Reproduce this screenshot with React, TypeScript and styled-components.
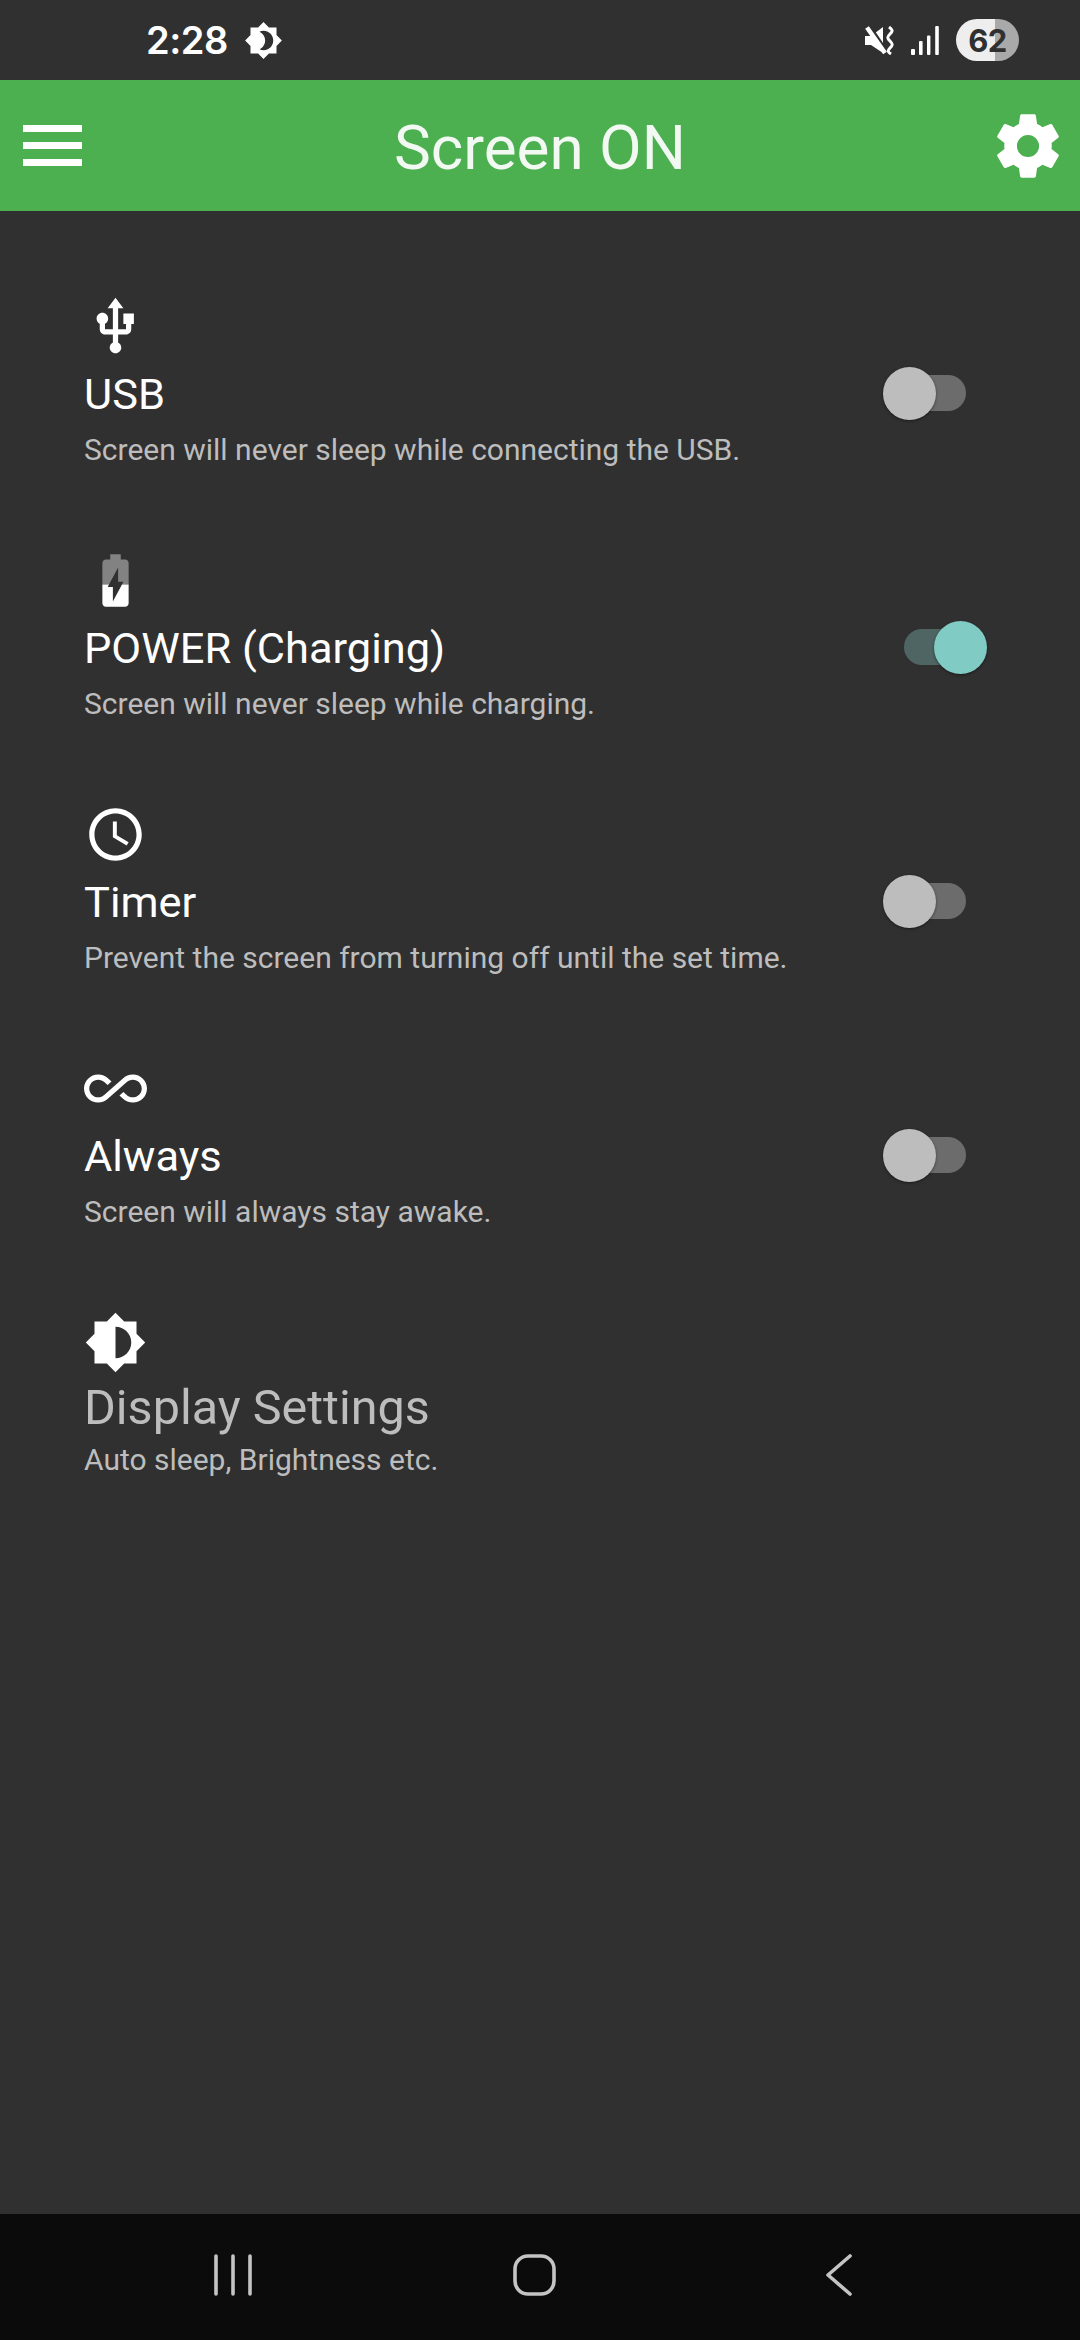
import React from "react";
import styled, { createGlobalStyle } from "styled-components";

const Global = createGlobalStyle`
  html, body { margin: 0; padding: 0; background: #303030; }
  * { box-sizing: border-box; }
`;

const Page = styled.div`
  width: 1080px;
  height: 2340px;
  display: flex;
  flex-direction: column;
  background: #303030;
  font-family: Roboto, "Noto Sans", sans-serif;
  color: #fff;
  overflow: hidden;
`;

const StatusBar = styled.div`
  height: 80px;
  flex: none;
  display: flex;
  align-items: center;
  justify-content: space-between;
  padding: 0 61px 0 146px;
`;

const StatusGroup = styled.div<{ $gap: number }>`
  display: flex;
  align-items: center;
  gap: ${(p) => p.$gap}px;
`;

const Clock = styled.span`
  font-family: Inter, Roboto, sans-serif;
  font-size: 38px;
  font-weight: 600;
  letter-spacing: -0.5px;
  line-height: 44px;
`;

const Battery = styled.div`
  width: 63px;
  height: 42px;
  border-radius: 21px;
  background: linear-gradient(to right, #eeeeee 0, #eeeeee 39px, #a9a9a9 39px, #a9a9a9 100%);
  color: #303030;
  display: flex;
  align-items: center;
  justify-content: center;
  font-family: Inter, Roboto, sans-serif;
  font-size: 31px;
  font-weight: 700;
  letter-spacing: -0.5px;
`;

const AppBar = styled.header`
  height: 131px;
  flex: none;
  background: #4caf50;
  display: grid;
  grid-template-columns: 1fr auto 1fr;
  align-items: center;
  padding: 0 14px 0 23px;
`;

const AppTitle = styled.h1`
  margin: 0 9px 0 0;
  padding-top: 5px;
  font-size: 62px;
  font-weight: 400;
  color: rgba(255, 255, 255, 0.93);
  line-height: 70px;
`;

const GearSlot = styled.div`
  display: flex;
  justify-content: flex-end;
`;

const Main = styled.main`
  flex: 1;
  padding: 84px 0 0 84px;
  display: flex;
  flex-direction: column;
`;

const Row = styled.section`
  height: 254px;
  display: flex;
  align-items: flex-start;
  justify-content: space-between;
  padding-right: 114px;
`;

const RowText = styled.div`
  display: flex;
  flex-direction: column;
`;

const IconBox = styled.svg`
  width: 63px;
  height: 63px;
  display: block;
  fill: #fff;
`;

const RowTitle = styled.div<{ $muted?: boolean }>`
  font-size: ${(p) => (p.$muted ? 48.5 : 43.4)}px;
  line-height: ${(p) => (p.$muted ? 56 : 52)}px;
  color: ${(p) => (p.$muted ? "#bdbdbd" : "#fff")};
  margin-top: ${(p) => (p.$muted ? 6 : 11)}px;
`;

const RowDesc = styled.div<{ $tight?: boolean }>`
  font-size: 30px;
  line-height: 38px;
  color: #bdbdbd;
  margin-top: ${(p) => (p.$tight ? 5 : 10)}px;
`;

const Switch = styled.div<{ $on?: boolean }>`
  position: relative;
  width: 83px;
  height: 53px;
  flex: none;
  margin-top: 72px;
  margin-right: ${(p) => (p.$on ? -21 : 0)}px;
`;

const Track = styled.div<{ $on?: boolean }>`
  position: absolute;
  top: 8px;
  left: ${(p) => (p.$on ? 0 : 14)}px;
  width: 69px;
  height: 36px;
  border-radius: 18px;
  background: ${(p) => (p.$on ? "#4f6563" : "#6c6c6c")};
`;

const Thumb = styled.div<{ $on?: boolean }>`
  position: absolute;
  top: 0;
  left: ${(p) => (p.$on ? 30 : 0)}px;
  width: 53px;
  height: 53px;
  border-radius: 50%;
  background: ${(p) => (p.$on ? "#80cbc4" : "#bdbdbd")};
  box-shadow: 0 1px 3px rgba(0, 0, 0, 0.45);
`;

const NavBar = styled.nav`
  height: 126px;
  flex: none;
  background: #0b0b0b;
  display: grid;
  grid-template-columns: 299px 312px auto;
  align-items: flex-start;
  padding: 40px 0 0 214px;
`;

const NavIcon = styled.svg`
  display: block;
  height: 42px;
  fill: none;
  stroke: #c4c4c4;
  stroke-width: 3.6px;
  stroke-linecap: round;
  stroke-linejoin: round;
`;

const MoonIcon = () => (
  <svg width="39" height="39" viewBox="0 0 24 24" fill="#fff">
    <path d="M20 8.69V4h-4.69L12 .69 8.69 4H4v4.69L.69 12 4 15.31V20h4.69L12 23.31 15.31 20H20v-4.69L23.31 12 20 8.69zM12 18c-.89 0-1.74-.2-2.5-.55C11.56 16.5 13 14.42 13 12s-1.44-4.5-3.5-5.45C10.26 6.2 11.11 6 12 6c3.31 0 6 2.69 6 6s-2.69 6-6 6z" />
  </svg>
);

const MuteIcon = () => (
  <svg width="29" height="29" viewBox="0 0 29 29">
    <path d="M0 10h6L18 1v26L6 19H0z" fill="#fff" />
    <path d="M5.5 1L23 27" stroke="#303030" strokeWidth="3" fill="none" />
    <path d="M2 1.5L20 27" stroke="#fff" strokeWidth="4.5" fill="none" />
    <path d="M24 1C28 4 28 5 25 8S22 12 25 15 28 19 25 22 23 26 26 28" stroke="#fff" strokeWidth="3" fill="none" />
  </svg>
);

const SignalIcon = () => (
  <svg width="28" height="29" viewBox="0 0 28 29" fill="#fff">
    <rect x="0" y="23" width="4" height="6" rx="1" />
    <rect x="8" y="15" width="3.6" height="14" rx="1" />
    <rect x="16" y="9.5" width="3.4" height="19.5" rx="1" />
    <rect x="24.2" y="0" width="3.6" height="29" rx="1" />
  </svg>
);

const MenuIcon = () => (
  <svg width="59" height="41" viewBox="0 0 59 41" fill="#fff">
    <rect x="0" y="0" width="59" height="7" />
    <rect x="0" y="17" width="59" height="7" />
    <rect x="0" y="34" width="59" height="7" />
  </svg>
);

const GearIcon = () => (
  <svg width="76" height="76" viewBox="0 0 24 24" fill="#fff">
    <path d="M19.43 12.98c.04-.32.07-.64.07-.98s-.03-.66-.07-.98l2.11-1.65c.19-.15.24-.42.12-.64l-2-3.46c-.12-.22-.39-.3-.61-.22l-2.49 1c-.52-.4-1.08-.73-1.69-.98l-.38-2.65C14.46 2.18 14.25 2 14 2h-4c-.25 0-.46.18-.49.42l-.38 2.65c-.61.25-1.17.59-1.69.98l-2.49-1c-.23-.09-.49 0-.61.22l-2 3.46c-.13.22-.07.49.12.64l2.11 1.65c-.04.32-.07.65-.07.98s.03.66.07.98l-2.11 1.65c-.19.15-.24.42-.12.64l2 3.46c.12.22.39.3.61.22l2.49-1c.52.4 1.08.73 1.69.98l.38 2.65c.03.24.24.42.49.42h4c.25 0 .46-.18.49-.42l.38-2.65c.61-.25 1.17-.59 1.69-.98l2.49 1c.23.09.49 0 .61-.22l2-3.46c.12-.22.07-.49-.12-.64l-2.11-1.65zM12 15.5c-1.93 0-3.5-1.57-3.5-3.5s1.57-3.5 3.5-3.5 3.5 1.57 3.5 3.5-1.57 3.5-3.5 3.5z" />
  </svg>
);

const icons: Record<string, React.ReactNode> = {
  usb: (
    <path d="M15 7v4h1v2h-3V5h2l-3-4-3 4h2v8H8v-2.07c.7-.37 1.2-1.08 1.2-1.93 0-1.21-.99-2.2-2.2-2.2-1.21 0-2.2.99-2.2 2.2 0 .85.5 1.56 1.2 1.93V13c0 1.11.89 2 2 2h3v3.05c-.71.37-1.2 1.1-1.2 1.95 0 1.22.99 2.2 2.2 2.2 1.21 0 2.2-.98 2.2-2.2 0-.85-.49-1.58-1.2-1.95V15h3c1.11 0 2-.89 2-2v-2h1V7h-4z" />
  ),
  power: (
    <>
      <path fillOpacity={0.4} d="M15.67 4H14V2h-4v2H8.33C7.6 4 7 4.6 7 5.33v8.17h2.53L13 7v5.5h2l-.53 1H17V5.33C17 4.6 16.4 4 15.67 4z" />
      <path d="M14.47 13.5L11 20v-5.5H9l.53-1H7v7.17C7 21.4 7.6 22 8.33 22h7.33c.74 0 1.34-.6 1.34-1.33V13.5h-2.53z" />
    </>
  ),
  timer: (
    <>
      <path d="M11.99 2C6.47 2 2 6.48 2 12s4.47 10 9.99 10C17.52 22 22 17.52 22 12S17.52 2 11.99 2zM12 20c-4.42 0-8-3.58-8-8s3.58-8 8-8 8 3.58 8 8-3.58 8-8 8z" />
      <path d="M12.5 7H11v6l5.25 3.15.75-1.23-4.5-2.67z" />
    </>
  ),
  always: (
    <path d="M18.6 6.62c-1.44 0-2.8.56-3.77 1.53L12 10.66 10.48 12h.01L7.8 14.39c-.64.64-1.49.99-2.4.99-1.87 0-3.39-1.51-3.39-3.38S3.53 8.62 5.4 8.62c.91 0 1.76.35 2.44 1.03l1.13 1 1.51-1.34L9.22 8.2C8.2 7.18 6.84 6.62 5.4 6.62 2.42 6.62 0 9.04 0 12s2.42 5.38 5.4 5.38c1.44 0 2.8-.56 3.77-1.53l2.83-2.5.01.01L13.52 12h-.01l2.69-2.39c.64-.64 1.49-.99 2.4-.99 1.87 0 3.39 1.51 3.39 3.38s-1.52 3.38-3.39 3.38c-.9 0-1.76-.35-2.44-1.03l-1.14-1.01-1.51 1.34 1.27 1.12c1.02 1.01 2.37 1.57 3.82 1.57 2.98 0 5.4-2.41 5.4-5.38s-2.42-5.37-5.4-5.37z" />
  ),
  display: (
    <path d="M20 15.31L23.31 12 20 8.69V4h-4.69L12 .69 8.69 4H4v4.69L.69 12 4 15.31V20h4.69L12 23.31 15.31 20H20v-4.69zM12 18V6c3.31 0 6 2.69 6 6s-2.69 6-6 6z" />
  ),
};

const rows = [
  { key: "usb", title: "USB", desc: "Screen will never sleep while connecting the USB.", on: false },
  { key: "power", title: "POWER (Charging)", desc: "Screen will never sleep while charging.", on: true },
  { key: "timer", title: "Timer", desc: "Prevent the screen from turning off until the set time.", on: false },
  { key: "always", title: "Always", desc: "Screen will always stay awake.", on: false },
];

export default function App() {
  return (
    <Page>
      <Global />
      <StatusBar>
        <StatusGroup $gap={16}>
          <Clock>2:28</Clock>
          <MoonIcon />
        </StatusGroup>
        <StatusGroup $gap={17}>
          <MuteIcon />
          <SignalIcon />
          <Battery>62</Battery>
        </StatusGroup>
      </StatusBar>
      <AppBar>
        <MenuIcon />
        <AppTitle>Screen ON</AppTitle>
        <GearSlot>
          <GearIcon />
        </GearSlot>
      </AppBar>
      <Main>
        {rows.map((r) => (
          <Row key={r.key}>
            <RowText>
              <IconBox viewBox="0 0 24 24">{icons[r.key]}</IconBox>
              <RowTitle>{r.title}</RowTitle>
              <RowDesc>{r.desc}</RowDesc>
            </RowText>
            <Switch $on={r.on}>
              <Track $on={r.on} />
              <Thumb $on={r.on} />
            </Switch>
          </Row>
        ))}
        <Row>
          <RowText>
            <IconBox viewBox="0 0 24 24">{icons.display}</IconBox>
            <RowTitle $muted>Display Settings</RowTitle>
            <RowDesc $tight>Auto sleep, Brightness etc.</RowDesc>
          </RowText>
        </Row>
      </Main>
      <NavBar>
        <NavIcon width="38" viewBox="0 0 38 42">
          <path d="M2 2v38M19 2v38M36 2v38" />
        </NavIcon>
        <NavIcon width="43" viewBox="0 0 43 42">
          <rect x="2" y="2" width="39" height="38" rx="13" />
        </NavIcon>
        <NavIcon width="28" viewBox="0 0 28 42">
          <path d="M25 2L3 21l22 19" />
        </NavIcon>
      </NavBar>
    </Page>
  );
}
